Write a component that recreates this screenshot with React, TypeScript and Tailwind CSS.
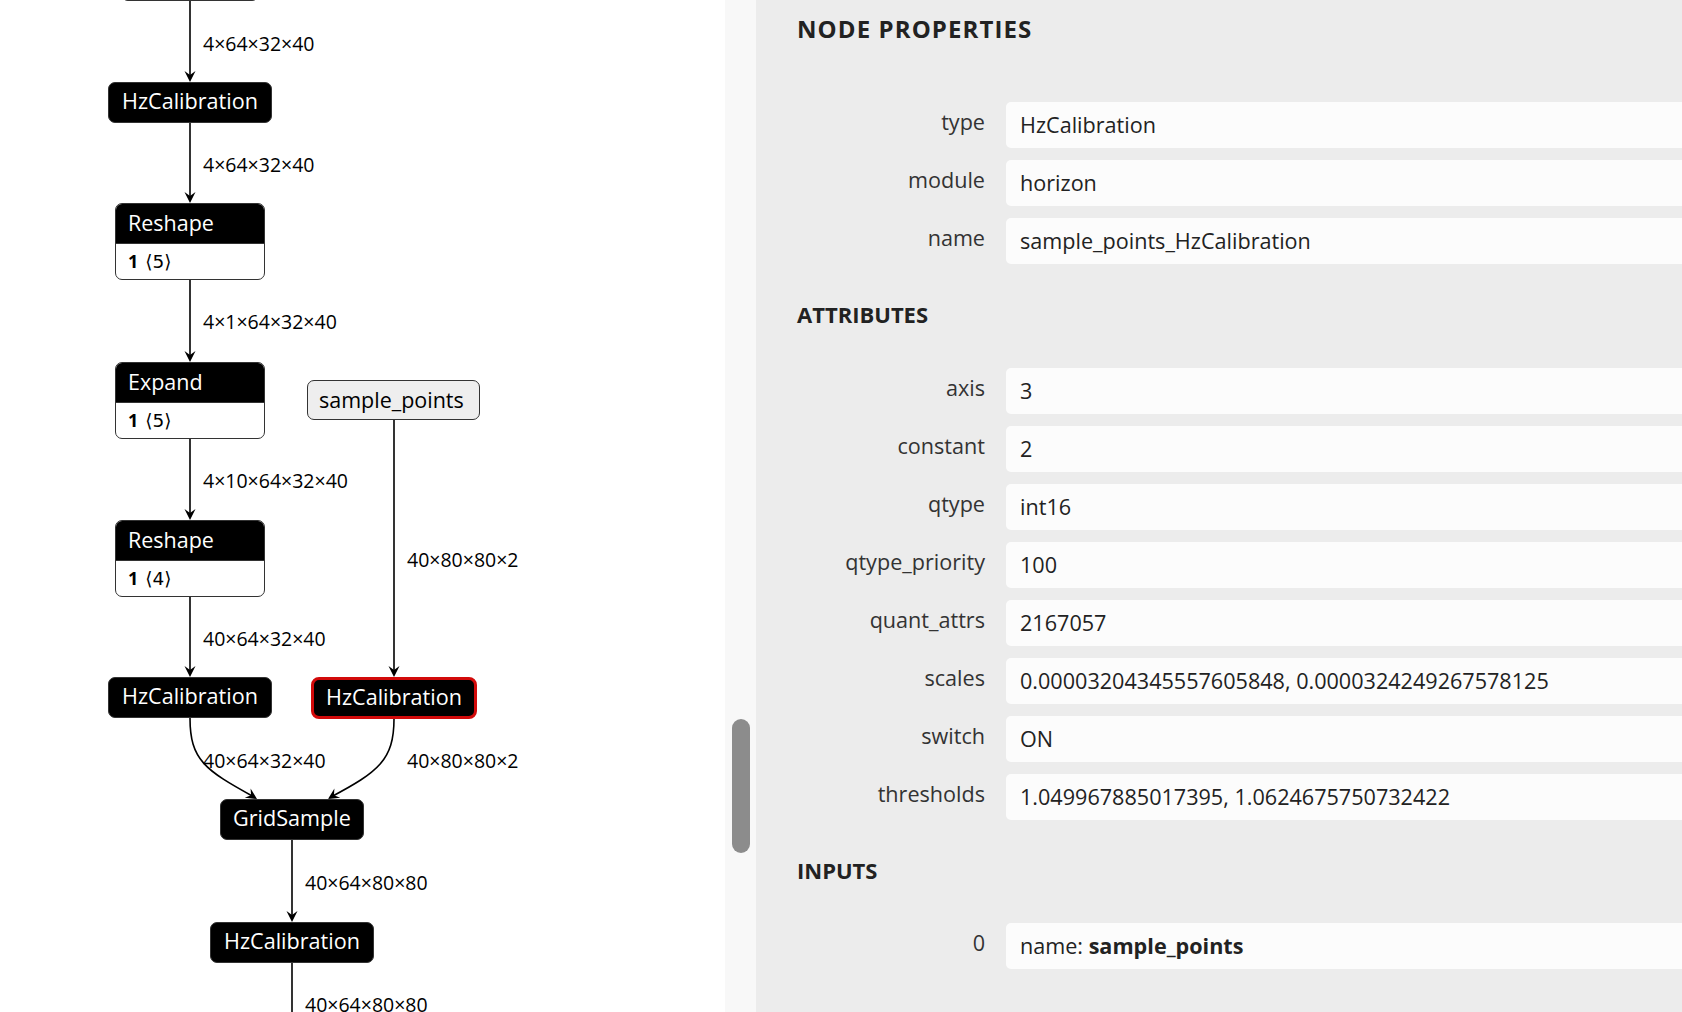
import React from 'react';

type GraphNode = {
  x: number;
  y: number;
  w: number;
  title: string;
  body?: string;
  selected?: boolean;
  input?: boolean;
};

type EdgeLabel = { x: number; y: number; text: string };

const nodes: GraphNode[] = [
  { x: 121, y: -40, w: 138, title: '' },
  { x: 108, y: 82, w: 164, title: 'HzCalibration' },
  { x: 115, y: 203, w: 150, title: 'Reshape', body: '⟨5⟩' },
  { x: 115, y: 362, w: 150, title: 'Expand', body: '⟨5⟩' },
  { x: 307, y: 380, w: 173, title: 'sample_points', input: true },
  { x: 115, y: 520, w: 150, title: 'Reshape', body: '⟨4⟩' },
  { x: 108, y: 677, w: 164, title: 'HzCalibration' },
  { x: 311, y: 677, w: 166, title: 'HzCalibration', selected: true },
  { x: 220, y: 799, w: 144, title: 'GridSample' },
  { x: 210, y: 922, w: 164, title: 'HzCalibration' },
];

const labels: EdgeLabel[] = [
  { x: 203, y: 34, text: '4×64×32×40' },
  { x: 203, y: 155, text: '4×64×32×40' },
  { x: 203, y: 312, text: '4×1×64×32×40' },
  { x: 203, y: 471, text: '4×10×64×32×40' },
  { x: 407, y: 550, text: '40×80×80×2' },
  { x: 203, y: 629, text: '40×64×32×40' },
  { x: 203, y: 751, text: '40×64×32×40' },
  { x: 407, y: 751, text: '40×80×80×2' },
  { x: 305, y: 873, text: '40×64×80×80' },
  { x: 305, y: 995, text: '40×64×80×80' },
];

const arrows: [number, number][] = [
  [190, 82],
  [190, 203],
  [190, 362],
  [190, 520],
  [190, 677],
  [394, 677],
  [257, 799],
  [328, 799],
  [292, 922],
];

function Arrow({ x, y, angle = 0 }: { x: number; y: number; angle?: number }) {
  return (
    <path
      d={`M ${x} ${y} L ${x - 5.5} ${y - 11} L ${x} ${y - 7} L ${x + 5.5} ${y - 11} Z`}
      fill="#000"
      transform={`rotate(${angle} ${x} ${y})`}
    />
  );
}

function Node({ n }: { n: GraphNode }) {
  if (n.input) {
    return (
      <div
        className="absolute h-[40px] rounded-[7px] border-[1.5px] border-[#333] bg-[#eeeeee] pl-[11px] text-[21.5px] leading-[37px] text-black"
        style={{ left: n.x, top: n.y, width: n.w }}
      >
        {n.title}
      </div>
    );
  }
  if (n.body) {
    return (
      <div
        className="absolute overflow-hidden rounded-[7px] border-[1.5px] border-[#333] bg-white"
        style={{ left: n.x, top: n.y, width: n.w }}
      >
        <div className="h-[39px] bg-black pl-[12px] text-[21.5px] leading-[38px] text-white">{n.title}</div>
        <div className="flex h-[36px] items-center gap-[7px] border-t border-[#333] pl-[12px] text-[18px] text-black">
          <span className="font-bold">1</span>
          <span className="font-['DejaVu_Sans',sans-serif] text-[18.5px]">{n.body}</span>
        </div>
      </div>
    );
  }
  return (
    <div
      className={
        n.selected
          ? 'absolute flex h-[42px] items-center justify-center rounded-[8px] border-[3px] border-[#d20a0a] bg-black text-[21.6px] text-white'
          : 'absolute flex h-[41px] items-center justify-center rounded-[7px] border-[1.5px] border-[#333] bg-black text-[21.6px] text-white'
      }
      style={{ left: n.x, top: n.y, width: n.w }}
    >
      <span className="-mt-[2px]">{n.title}</span>
    </div>
  );
}

function Graph() {
  return (
    <div className="relative h-full w-[725px] shrink-0 overflow-hidden bg-white">
      <svg className="absolute inset-0" width={725} height={1012}>
        <g stroke="#000" strokeWidth={1.6} fill="none">
          <path d="M 190 0 L 190 78" />
          <path d="M 190 122 L 190 199" />
          <path d="M 190 280 L 190 358" />
          <path d="M 190 438 L 190 516" />
          <path d="M 190 597 L 190 673" />
          <path d="M 394 420 L 394 673" />
          <path d="M 190 718 C 190 760, 205 770, 254 797" />
          <path d="M 394 719 C 394 760, 378 772, 331 797" />
          <path d="M 292 840 L 292 918" />
          <path d="M 292 962 L 292 1012" />
        </g>
        {arrows.map(([x, y], i) => (
          <Arrow key={i} x={x} y={y} angle={i === 6 ? -58 : i === 7 ? 58 : 0} />
        ))}
      </svg>
      {nodes.map((n, i) => (
        <Node key={i} n={n} />
      ))}
      {labels.map((l, i) => (
        <div key={i} className="absolute whitespace-nowrap text-[19.5px] leading-[19px] text-black" style={{ left: l.x, top: l.y }}>
          {l.text}
        </div>
      ))}
    </div>
  );
}

function Row({ label, children }: { label: string; children: React.ReactNode }) {
  return (
    <div className="flex h-[46px] items-center">
      <div className="w-[188px] shrink-0 pb-[5px] text-right text-[21.6px] text-[#333]">{label}</div>
      <div className="ml-[21px] flex h-full flex-1 items-center whitespace-nowrap rounded-l-[5px] bg-[#fcfcfc] pl-[14px] text-[21.6px] text-[#222]">
        {children}
      </div>
    </div>
  );
}

export default function App() {
  return (
    <div className="flex h-[1012px] w-[1682px] overflow-hidden font-['Open_Sans',sans-serif]">
      <Graph />

      {/* scrollbar track */}
      <div className="h-full w-[31px] shrink-0 bg-[#f8f8f8] pl-[7px] pt-[719px]">
        <div className="h-[134px] w-[18px] rounded-full bg-[#8c8c8c]" />
      </div>

      {/* properties */}
      <div className="h-full flex-1 overflow-hidden bg-[#ececec] pl-[41px] pt-[17px]">
        <div className="text-[24px] font-bold leading-[24px] tracking-[1.1px] text-[#222]">NODE PROPERTIES</div>
        <div className="mt-[61px] flex flex-col gap-[12px]">
          <Row label="type">HzCalibration</Row>
          <Row label="module">horizon</Row>
          <Row label="name">sample_points_HzCalibration</Row>
        </div>

        <div className="mt-[39px] text-[22px] font-bold leading-[22px] text-[#222]">ATTRIBUTES</div>
        <div className="mt-[43px] flex flex-col gap-[12px]">
          <Row label="axis">3</Row>
          <Row label="constant">2</Row>
          <Row label="qtype">int16</Row>
          <Row label="qtype_priority">100</Row>
          <Row label="quant_attrs">2167057</Row>
          <Row label="scales">0.00003204345557605848, 0.0000324249267578125</Row>
          <Row label="switch">ON</Row>
          <Row label="thresholds">1.049967885017395, 1.0624675750732422</Row>
        </div>

        <div className="mt-[39px] text-[22px] font-bold leading-[22px] text-[#222]">INPUTS</div>
        <div className="mt-[42px] flex flex-col gap-[12px]">
          <Row label="0">
            name:&nbsp;<span className="font-bold">sample_points</span>
          </Row>
        </div>
      </div>
    </div>
  );
}
